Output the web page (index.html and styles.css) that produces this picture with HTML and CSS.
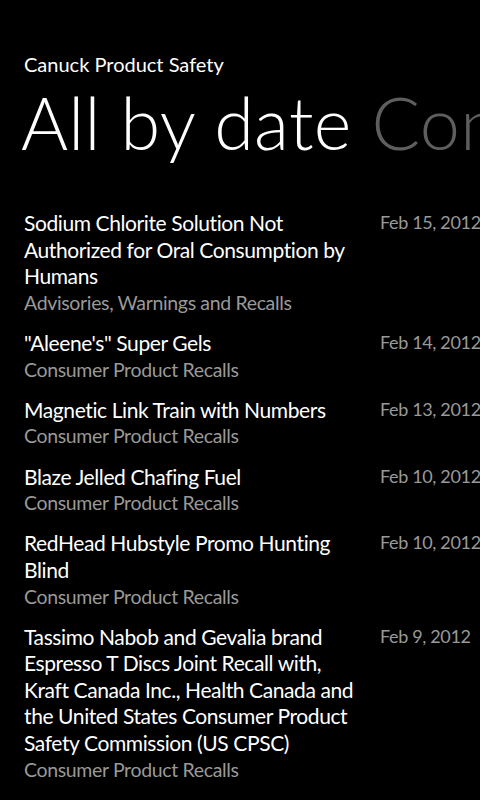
FILE: index.html
```html
<!DOCTYPE html>
<html>
<head>
<meta charset="utf-8">
<link rel="stylesheet" href="styles.css">
</head>
<body>
<div class="screen">
  <div class="app-title">Canuck Product Safety</div>
  <div class="pivot-header">
    <span class="pivot-current">All by date</span><span class="pivot-next">Consumer</span>
  </div>
  <ul class="list">
    <li class="item">
      <div class="text">
        <div class="title">Sodium Chlorite Solution Not Authorized for Oral Consumption by Humans</div>
        <div class="category">Advisories, Warnings and Recalls</div>
      </div>
      <div class="date">Feb 15, 2012</div>
    </li>
    <li class="item">
      <div class="text">
        <div class="title">"Aleene's" Super Gels</div>
        <div class="category">Consumer Product Recalls</div>
      </div>
      <div class="date">Feb 14, 2012</div>
    </li>
    <li class="item">
      <div class="text">
        <div class="title">Magnetic Link Train with Numbers</div>
        <div class="category">Consumer Product Recalls</div>
      </div>
      <div class="date">Feb 13, 2012</div>
    </li>
    <li class="item">
      <div class="text">
        <div class="title">Blaze Jelled Chafing Fuel</div>
        <div class="category">Consumer Product Recalls</div>
      </div>
      <div class="date">Feb 10, 2012</div>
    </li>
    <li class="item">
      <div class="text">
        <div class="title">RedHead Hubstyle Promo Hunting Blind</div>
        <div class="category">Consumer Product Recalls</div>
      </div>
      <div class="date">Feb 10, 2012</div>
    </li>
    <li class="item">
      <div class="text">
        <div class="title">Tassimo Nabob and Gevalia brand Espresso T Discs Joint Recall with, Kraft Canada Inc., Health Canada and the United States Consumer Product Safety Commission (US CPSC)</div>
        <div class="category">Consumer Product Recalls</div>
      </div>
      <div class="date">Feb 9, 2012</div>
    </li>
  </ul>
</div>
</body>
</html>
```
FILE: styles.css
```css
html, body {
  margin: 0;
  padding: 0;
  background: #000;
}
.screen {
  width: 480px;
  height: 800px;
  overflow: hidden;
  background: #000;
  color: #fff;
  font-family: Lato, "Open Sans", sans-serif;
}
.app-title {
  padding: 50px 0 0 24px;
  font-size: 20px;
  line-height: 28px;
}
.pivot-header {
  white-space: nowrap;
  overflow: hidden;
  padding-left: 21px;
  font-size: 72px;
  font-weight: 300;
  line-height: 88px;
  letter-spacing: 0.3px;
}
.pivot-next {
  color: #5e5e5e;
  margin-left: 20px;
}
.list {
  list-style: none;
  margin: 44px 0 0 0;
  padding: 0 0 0 24px;
}
.item {
  display: flex;
  align-items: flex-start;
  margin-bottom: 13.6px;
}
.text {
  width: 336px;
  flex: none;
  margin-right: 20px;
}
.title {
  font-size: 21px;
  line-height: 26.6px;
  letter-spacing: -0.4px;
}
.category {
  font-size: 19.5px;
  line-height: 26.6px;
  letter-spacing: -0.35px;
  color: #999;
}
.date {
  white-space: nowrap;
  font-size: 18px;
  line-height: 24px;
  letter-spacing: -0.35px;
  color: #999;
}
```
